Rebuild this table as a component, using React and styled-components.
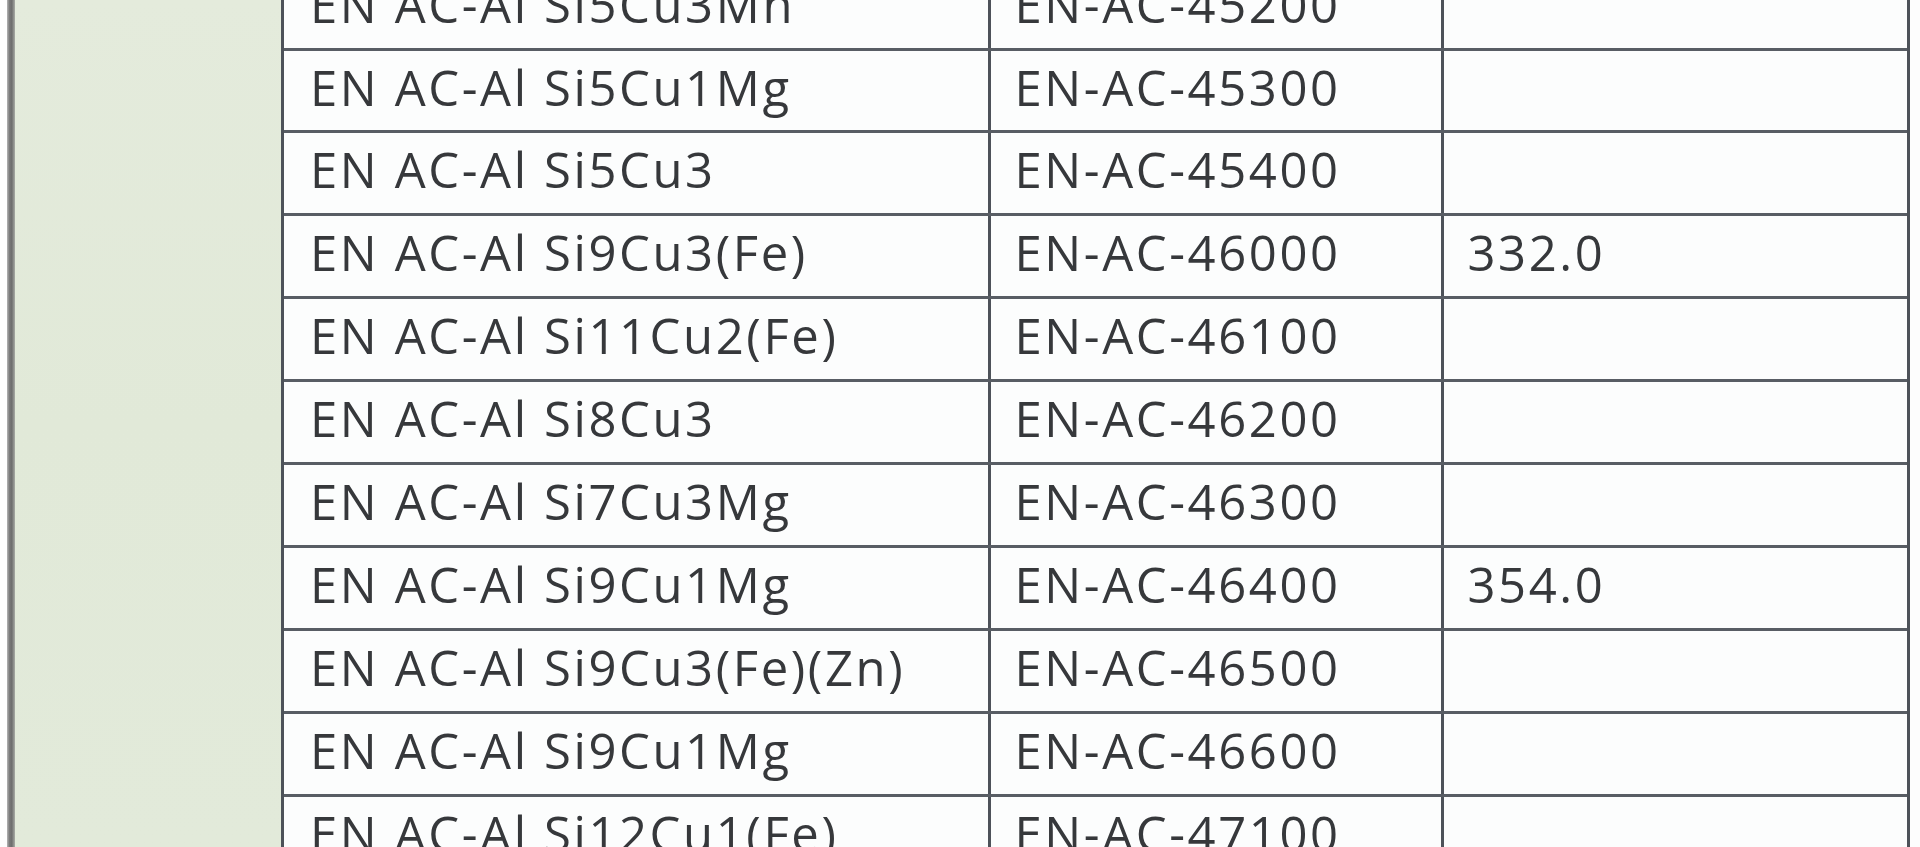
import React from 'react';
import styled, { createGlobalStyle } from 'styled-components';

const GlobalStyle = createGlobalStyle`
  html, body {
    margin: 0;
    padding: 0;
    background: #ffffff;
    overflow: hidden;
  }
`

const Page = styled.div`
  display: flex;
  height: 847px;
  overflow: hidden;
  background: #ffffff;
`

const Edge = styled.div`
  flex: 0 0 7px;
  background: #fdfdfd;
`

const Rule = styled.div`
  flex: 0 0 8px;
  background: linear-gradient(to right, #b4b4b4, #7a7a7a 30%, #6e6e6e 60%, #a9aca6);
`

const Margin = styled.div`
  flex: 0 0 266px;
  background: linear-gradient(to bottom, #e4ebdc, #e1e9d8 50%, #e2eada);
`

const Table = styled.div`
  flex: 0 0 1628.5px;
  box-sizing: border-box;
  margin-top: -32.4px;
  align-self: flex-start;
  border-left: 3px solid #4d5259;
  border-right: 3px solid #4d5259;
  background: #fcfdfd;
`

const Row = styled.div`
  display: grid;
  grid-template-columns: 706.5px 453px 1fr;
  height: 82.9px;
  box-sizing: border-box;
  border-bottom: 3px solid #585d64;
`

const Cell = styled.div`
  box-sizing: border-box;
  padding: 12px 0 0 ${props => props.pad}px;
  border-right: ${props => props.last ? 'none' : '3px solid #4d5259'};
  font-family: "Open Sans", "Liberation Sans", sans-serif;
  font-size: 49px;
  line-height: 49px;
  letter-spacing: 2.6px;
  color: #36383b;
  white-space: nowrap;
  overflow: hidden;
`

const Trail = styled.div`
  flex: 1;
  background: #fdfdfd;
`

const rows = [
  ['EN AC-Al Si5Cu3Mn', 'EN-AC-45200', ''],
  ['EN AC-Al Si5Cu1Mg', 'EN-AC-45300', ''],
  ['EN AC-Al Si5Cu3', 'EN-AC-45400', ''],
  ['EN AC-Al Si9Cu3(Fe)', 'EN-AC-46000', '332.0'],
  ['EN AC-Al Si11Cu2(Fe)', 'EN-AC-46100', ''],
  ['EN AC-Al Si8Cu3', 'EN-AC-46200', ''],
  ['EN AC-Al Si7Cu3Mg', 'EN-AC-46300', ''],
  ['EN AC-Al Si9Cu1Mg', 'EN-AC-46400', '354.0'],
  ['EN AC-Al Si9Cu3(Fe)(Zn)', 'EN-AC-46500', ''],
  ['EN AC-Al Si9Cu1Mg', 'EN-AC-46600', ''],
  ['EN AC-Al Si12Cu1(Fe)', 'EN-AC-47100', ''],
]

export default function App() {
  return (
    <>
      <GlobalStyle />
      <Page>
        <Edge />
        <Rule />
        <Margin />
        <Table>
          {rows.map((r, i) => (
            <Row key={i}>
              <Cell pad={26}>{r[0]}</Cell>
              <Cell pad={24}>{r[1]}</Cell>
              <Cell pad={24} last>{r[2]}</Cell>
            </Row>
          ))}
        </Table>
        <Trail />
      </Page>
    </>
  );
}
